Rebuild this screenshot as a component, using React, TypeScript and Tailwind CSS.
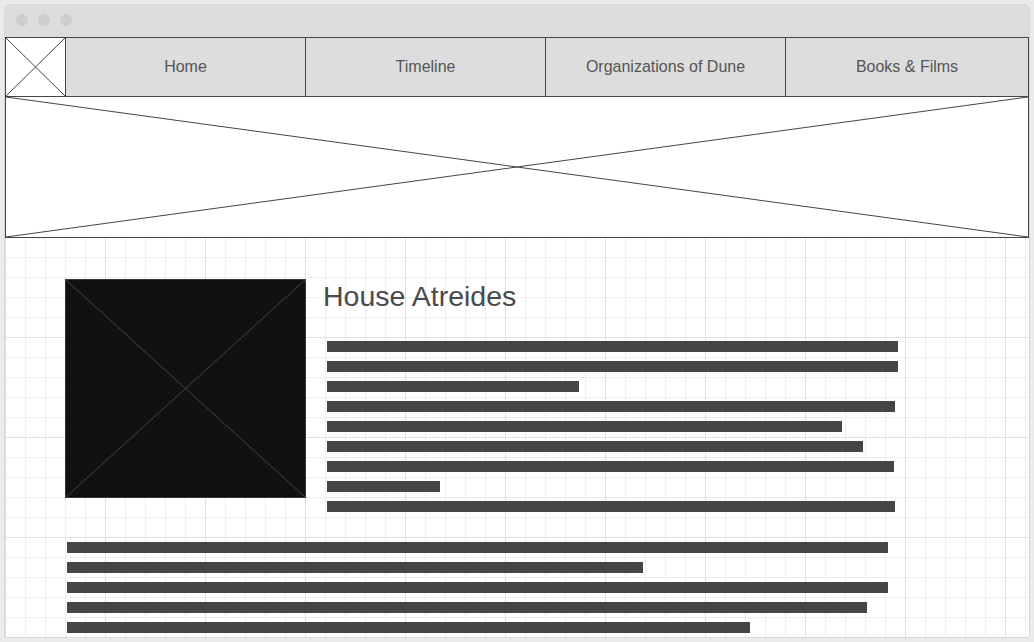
const navItems = ["Home", "Timeline", "Organizations of Dune", "Books & Films"];

const sideBars = [571, 571, 252, 568, 515, 536, 567, 113, 568];
const bottomBars = [821, 576, 821, 800, 683];

const Cross = ({ stroke }: { stroke: string }) => (
  <svg className="absolute inset-0 h-full w-full" preserveAspectRatio="none" viewBox="0 0 100 100">
    <line x1="0" y1="0" x2="100" y2="100" stroke={stroke} strokeWidth="1" vectorEffect="non-scaling-stroke" />
    <line x1="100" y1="0" x2="0" y2="100" stroke={stroke} strokeWidth="1" vectorEffect="non-scaling-stroke" />
  </svg>
);

const Bar = ({ width }: { width: number }) => (
  <div className="h-[11px] bg-[#454545]" style={{ width }} />
);

const App = () => {
  return (
    <div className="h-[642px] overflow-hidden bg-[#ebebeb] p-[4px] font-['Liberation_Sans',Arial,sans-serif]">
      <div className="flex h-[634px] w-[1026px] flex-col overflow-hidden rounded-t-[6px] border border-[#d8d8d8] bg-[#dddddd]">
        {/* window title bar */}
        <div className="flex h-[32px] shrink-0 items-start gap-[10px] pl-[11px] pt-[9px]">
          <span className="h-[12px] w-[12px] rounded-full bg-[#cecece]" />
          <span className="h-[12px] w-[12px] rounded-full bg-[#cecece]" />
          <span className="h-[12px] w-[12px] rounded-full bg-[#cecece]" />
        </div>

        <div className="flex flex-1 flex-col bg-white bg-[linear-gradient(to_right,#e0e0e0_1px,transparent_1px),linear-gradient(to_bottom,#e0e0e0_1px,transparent_1px),linear-gradient(to_right,#eeeeee_1px,transparent_1px),linear-gradient(to_bottom,#eeeeee_1px,transparent_1px)] bg-[size:100px_100px,100px_100px,20px_20px,20px_20px]">
          {/* nav */}
          <nav className="flex h-[60px] shrink-0 border border-[#444444] bg-[#dddddd]">
            <div className="relative w-[60px] shrink-0 border-r border-[#444444] bg-white">
              <Cross stroke="#444444" />
            </div>
            {navItems.map((item, i) => (
              <div
                key={item}
                className={
                  i === navItems.length - 1
                    ? "flex flex-1 items-center justify-center text-[16px] text-[#555555]"
                    : "flex w-[240px] shrink-0 items-center justify-center border-r border-[#444444] text-[16px] text-[#555555]"
                }
              >
                {item}
              </div>
            ))}
          </nav>

          {/* hero placeholder */}
          <div className="relative h-[141px] shrink-0 border-x border-b border-[#444444] bg-white">
            <Cross stroke="#444444" />
          </div>

          {/* content */}
          <div className="pl-[60px] pt-[41px]">
            <div className="flex items-start">
              <div className="relative h-[219px] w-[241px] shrink-0 border border-[#333333] bg-[#111111]">
                <Cross stroke="#444444" />
              </div>
              <div className="ml-[17px] flex flex-col">
                <h1 className="text-[28.5px] leading-[35px] text-[#4a4a4a]">House Atreides</h1>
                <div className="ml-[4px] mt-[27px] flex flex-col gap-[9px]">
                  {sideBars.map((w, i) => (
                    <Bar key={i} width={w} />
                  ))}
                </div>
              </div>
            </div>
            <div className="ml-[2px] mt-[30px] flex flex-col gap-[9px]">
              {bottomBars.map((w, i) => (
                <Bar key={i} width={w} />
              ))}
            </div>
          </div>
        </div>
      </div>
    </div>
  );
};

export default App;
